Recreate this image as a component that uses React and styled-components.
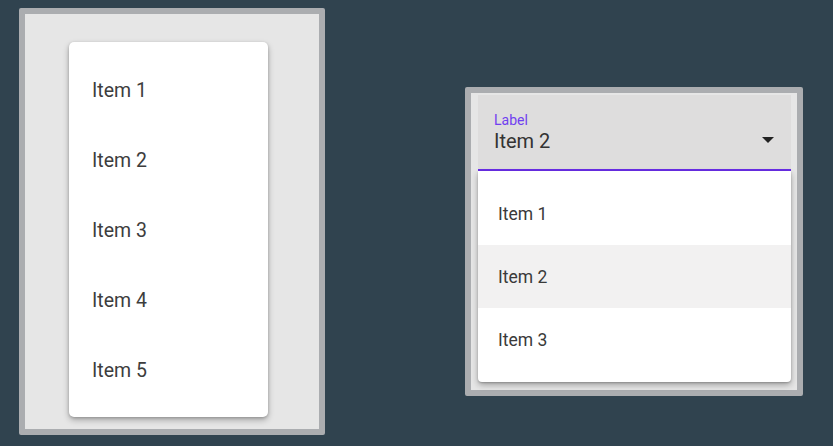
import React from 'react';
import styled, { createGlobalStyle } from 'styled-components';

const GlobalStyle = createGlobalStyle`
  html, body {
    margin: 0;
    padding: 0;
    background: #30434f;
    font-family: Roboto, "Liberation Sans", sans-serif;
  }
  body {
    width: 833px;
    height: 446px;
    overflow: hidden;
  }
`;

const Stage = styled.div`
  display: flex;
  align-items: flex-start;
  padding: 8px 0 0 19px;
`;

const Frame = styled.div`
  box-sizing: border-box;
  width: ${(p) => p.w}px;
  height: ${(p) => p.h}px;
  margin-top: ${(p) => p.top || 0}px;
  margin-left: ${(p) => p.left || 0}px;
  border: 6px solid #abadb0;
  border-radius: 2px;
  background: #e6e6e6;
  padding: ${(p) => p.pad};
`;

const Card = styled.div`
  box-sizing: border-box;
  width: 199px;
  height: 375px;
  background: #fff;
  border-radius: 5px;
  box-shadow: 0 3px 6px rgba(0, 0, 0, 0.28), 0 1px 3px rgba(0, 0, 0, 0.18);
  padding: 13px 0 12px;
  display: flex;
  flex-direction: column;
`;

const ListItem = styled.div`
  height: 70px;
  display: flex;
  align-items: center;
  padding-left: 23px;
  font-size: 19.5px;
  color: #3d3d3d;
`;

const Field = styled.div`
  box-sizing: border-box;
  height: 76px;
  background: #dedddd;
  border-bottom: 2px solid #6a2ee8;
  padding: 18px 16px 0 16px;
  display: flex;
  align-items: flex-start;
  justify-content: space-between;
`;

const FieldText = styled.div`
  display: flex;
  flex-direction: column;
`;

const FloatLabel = styled.span`
  font-size: 14px;
  line-height: 14px;
  color: #7040f0;
`;

const Value = styled.span`
  font-size: 20px;
  line-height: 24px;
  color: #333;
  margin-top: 2px;
`;

const Arrow = styled.svg`
  margin-top: 24px;
  margin-right: 1px;
`;

const Menu = styled.div`
  background: #fff;
  border-radius: 0 0 4px 4px;
  box-shadow: 0 3px 6px rgba(0, 0, 0, 0.3), 0 1px 2px rgba(0, 0, 0, 0.2);
  padding: 11px 0;
`;

const MenuItem = styled.div`
  height: 63px;
  display: flex;
  align-items: center;
  padding-left: 20px;
  font-size: 17.5px;
  color: #3a3a3a;
  background: ${(p) => (p.active ? '#f2f1f1' : '#fff')};
`;

export default function App() {
  return (
    <>
      <GlobalStyle />
      <Stage>
        <Frame w={306} h={427} pad="28px 0 0 44px">
          <Card>
            {[1, 2, 3, 4, 5].map((n) => (
              <ListItem key={n}>Item {n}</ListItem>
            ))}
          </Card>
        </Frame>
        <Frame w={338} h={309} top={79} left={140} pad="2px 6px 0 7px">
          <Field>
            <FieldText>
              <FloatLabel>Label</FloatLabel>
              <Value>Item 2</Value>
            </FieldText>
            <Arrow width="12" height="6" viewBox="0 0 12 6">
              <path d="M0 0 L12 0 L6 6 Z" fill="#222" />
            </Arrow>
          </Field>
          <Menu>
            {[1, 2, 3].map((n) => (
              <MenuItem key={n} active={n === 2}>
                Item {n}
              </MenuItem>
            ))}
          </Menu>
        </Frame>
      </Stage>
    </>
  );
}
